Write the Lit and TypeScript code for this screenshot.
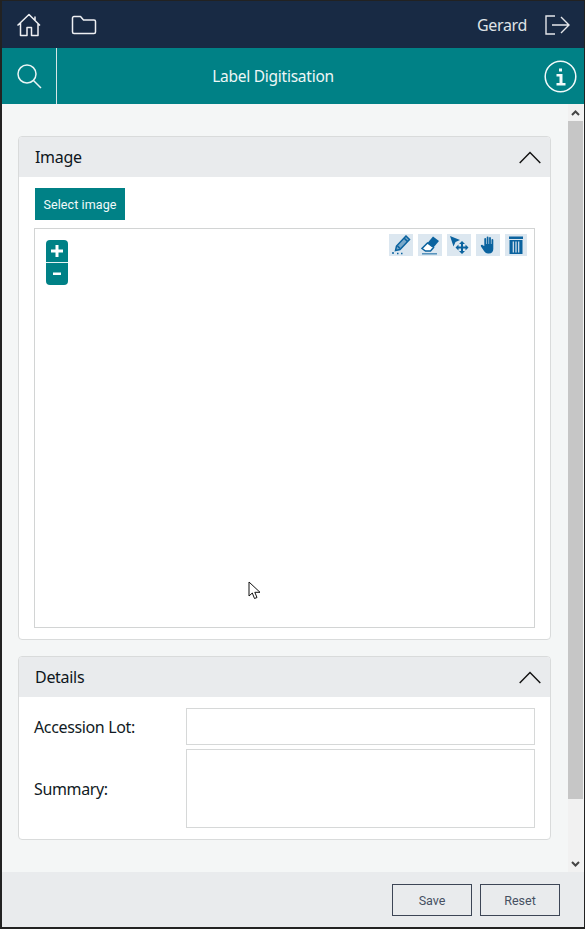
import { LitElement, html, css } from "lit";
import { customElement } from "lit/decorators.js";

@customElement("app-root")
export class AppRoot extends LitElement {
  static styles = css`
    :host { display: block; width: 585px; height: 929px; box-sizing: border-box; background: #222; padding: 1px 1px 2px 2px; font-family: "Noto Sans", sans-serif; overflow: hidden; }
    * { box-sizing: border-box; }
    .frame { height: 100%; display: flex; flex-direction: column; position: relative; }
    .top { height: 47px; flex: none; background: #182a44; display: flex; align-items: center; color: #e4e6ea; padding: 0 14px 0 14px; }
    .top svg { display: block; }
    .folder { margin-left: 29px; }
    .user { margin-left: auto; font-size: 16px; letter-spacing: -0.35px; margin-right: 18px; color: #dfe2e6; }
    .bar { height: 56px; flex: none; background: #008186; display: flex; align-items: center; color: #fff; position: relative; }
    .search { width: 55px; height: 100%; border-right: 1px solid #d6e6e6; display: flex; align-items: center; justify-content: center; flex: none; }
    .title { width: 432px; text-align: center; font-size: 15.5px; letter-spacing: -0.25px; font-weight: 400; color: #eef6f6; }
    .info { margin-left: auto; margin-right: 7px; }
    .mid { flex: 1; min-height: 0; display: flex; background: #f4f6f6; }
    .content { flex: 1; padding: 32px 17px 0 16px; display: flex; flex-direction: column; gap: 16px; }
    .card { background: #fff; border: 1px solid #d9dbdb; border-radius: 4px; overflow: hidden; }
    .head { height: 40px; background: #e9ebed; display: flex; align-items: center; justify-content: space-between; padding: 0 9px 0 16px; font-size: 16px; letter-spacing: -0.3px; color: #0e1620; }
    .img-body { padding: 11px 15px 11px 16px; }
    .select { display: block; width: 90px; height: 32px; border: none; padding: 0; background: #008186; color: #f2fafa; font: 12.5px Roboto, sans-serif; letter-spacing: 0.1px; }
    .canvas { position: relative; margin: 8px 0 0 -1px; width: 501px; height: 400px; border: 1px solid #d2d4d4; background: #fff; }
    .zoom { position: absolute; left: 11px; top: 11px; width: 22px; height: 45px; border-radius: 4px; background: #008186; color: #fff; display: flex; flex-direction: column; overflow: hidden; }
    .zoom span { height: 22px; display: flex; align-items: center; justify-content: center; }
    .zoom i { height: 1px; background: #e5f2f2; }
    .tools { position: absolute; right: 7px; top: 5px; display: flex; gap: 5px; }
    .tool { width: 24px; height: 22px; background: #dce7f0; display: flex; align-items: center; justify-content: center; }
    .tool.narrow { width: 22px; }
    .tool svg { display: block; }
    .cursor { position: absolute; left: 213px; top: 352px; display: block; }
    .det-body { padding: 11px 15px 11px 15px; display: grid; grid-template-columns: 152px 349px; row-gap: 4px; }
    .det-body label { font-size: 16px; letter-spacing: -0.36px; color: #111a24; display: flex; align-items: center; }
    .field { border: 1px solid #d6d8d8; background: #fff; height: 37px; }
    .field.tall { height: 79px; }
    .sb { width: 15px; flex: none; margin-right: 1px; background: #f1f1f1; display: flex; flex-direction: column; }
    .arrow { height: 17px; flex: none; display: flex; align-items: center; justify-content: center; }
    .thumb { height: 678px; background: #c6c6c6; flex: none; }
    .sb .end { margin-top: auto; }
    .foot { height: 55px; flex: none; background: #e9ebed; display: flex; justify-content: flex-end; gap: 8px; padding: 12px 24px 0 0; align-items: flex-start; }
    .foot button { width: 80px; height: 32px; background: transparent; border: 1px solid #3d4656; color: #465062; font: 12.5px Roboto, sans-serif; padding: 0; }
  `;

  render() {
    return html`<div class="frame">
      <div class="top">
        <svg width="26" height="24" viewBox="0 0 26 24" fill="none" stroke="#eef0f3" stroke-width="1.5" stroke-linejoin="round"><path d="M1.5 12.5 13 1.5l11 11M4.500 10v12.500h6.500v-8h4.500v8H22V10M19 7V3.500"/></svg>
        <svg class="folder" width="26" height="20" viewBox="0 0 26 20" fill="none" stroke="#eef0f3" stroke-width="1.5" stroke-linejoin="round"><path d="M1.500 3a1.500 1.500 0 0 1 1.500-1.500h6.500l3 3.500H23a1.500 1.500 0 0 1 1.500 1.500V17a1.500 1.500 0 0 1-1.500 1.500H3A1.500 1.500 0 0 1 1.500 17z"/></svg>
        <span class="user">Gerard</span>
        <svg width="25" height="20" viewBox="0 0 25 20" fill="none" stroke="#e4e6ea" stroke-width="1.4"><path d="M10 1H1v18h9M7 10h17M16 2l8 8-8 8"/></svg>
      </div>
      <div class="bar">
        <div class="search"><svg width="26" height="26" viewBox="0 0 26 26" fill="none" stroke="#eaf5f5" stroke-width="1.500"><circle cx="11" cy="11" r="9"/><path d="M17.500 17.500 25 25"/></svg></div>
        <div class="title">Label Digitisation</div>
        <svg class="info" width="33" height="33" viewBox="0 0 33 33" fill="none"><circle cx="16.500" cy="16.500" r="15.300" stroke="#f2fafa" stroke-width="1.500"/><path d="M15 8.500h3v3h-3zM12.500 14h6v9h3v2.500h-9V23h3v-6.500h-3z" fill="#f2fafa"/></svg>
      </div>
      <div class="mid">
        <div class="content">
          <section class="card">
            <div class="head">Image
              <svg width="22" height="14" viewBox="0 0 22 14" fill="none" stroke="#111" stroke-width="1.400"><path d="M.7 13 11 2.500 21.300 13"/></svg>
            </div>
            <div class="img-body">
              <button class="select">Select image</button>
              <div class="canvas">
                <div class="zoom">
                  <span><svg width="14" height="14" viewBox="0 0 14 14" fill="#fff"><path d="M5.500 1h3v4.500H13v3H8.500V13h-3V8.500H1v-3h4.500z"/></svg></span>
                  <i></i>
                  <span><svg width="10" height="4" viewBox="0 0 10 4" fill="#fff"><path d="M1 .5h8v2.500H1z"/></svg></span>
                </div>
                <div class="tools">
                  <div class="tool"><svg width="20" height="20" viewBox="0 0 20 20"><path d="M15 1l3.500 3.500-9.500 10-4.500 1 1-4.500z" fill="#7aa8c9" stroke="#0b639f" stroke-width="1.500"/><path d="M13 3l3.500 3.500M6.500 11l2.500 2.500" stroke="#0b639f" stroke-width="1.500"/><path d="M1 18h2M6 18.500h1.500M10 18.500h1.500" stroke="#0b639f" stroke-width="1.400"/></svg></div>
                  <div class="tool"><svg width="22" height="20" viewBox="0 0 22 20"><path d="M8.500 8l5.500-6.500 6 4.500-5.500 6.500z" fill="#0b639f"/><path d="M8.500 8l6 4.500-3 3.500H6.500L3 13.500z" fill="#fff" stroke="#0b639f" stroke-width="1.500"/><path d="M3 18.800h15" stroke="#0b639f" stroke-width="1.400" opacity=".7"/></svg></div>
                  <div class="tool"><svg width="22" height="20" viewBox="0 0 22 20" fill="#0b639f"><path d="M2 1l10 4-4.500 2-2 4.500z"/><path d="M14 6l3 3h-2v2.500h2.500v-2l3 3-3 3v-2H15V16h2l-3 3-3-3h2v-2.500h-2.500v2l-3-3 3-3v2H13V9h-2z"/></svg></div>
                  <div class="tool"><svg width="20" height="20" viewBox="0 0 20 20" fill="#0b639f"><path d="M6.300 11V4a.9.9 0 0 1 1.800 0v5h.6V2.500a.9.9 0 0 1 1.800 0V9h.6V3a.9.9 0 0 1 1.800 0v6h.6V5a.9.9 0 0 1 1.800 0v9c0 2.500-1.500 4.500-4.500 4.500H10c-2 0-3-1-4-2.500l-3-4.500c-.7-1.100.8-2.300 1.700-1.300z"/></svg></div>
                  <div class="tool narrow"><svg width="16" height="20" viewBox="0 0 16 20" fill="#0b639f"><path d="M1 1.500h14v2.500H1zM1.500 5h13v14h-13z"/><path d="M5.300 6.500v11M8 6.500v11M10.700 6.500v11" stroke="#dce7f0" stroke-width="1.200"/></svg></div>
                </div>
                <svg class="cursor" width="14" height="20" viewBox="0 0 14 20"><path d="M1 1v14l3.300-3 2.200 5.500 2.500-1-2.200-5.200H12z" fill="#fff" stroke="#111" stroke-width="1"/></svg>
              </div>
            </div>
          </section>
          <section class="card">
            <div class="head">Details
              <svg width="22" height="14" viewBox="0 0 22 14" fill="none" stroke="#111" stroke-width="1.400"><path d="M.7 13 11 2.500 21.300 13"/></svg>
            </div>
            <div class="det-body">
              <label>Accession Lot:</label><div class="field"></div>
              <label>Summary:</label><div class="field tall"></div>
            </div>
          </section>
        </div>
        <div class="sb">
          <div class="arrow"><svg width="9" height="6" viewBox="0 0 9 6" fill="none" stroke="#444" stroke-width="2"><path d="M1 5l3.500-3.500L8 5"/></svg></div>
          <div class="thumb"></div>
          <div class="arrow end"><svg width="9" height="6" viewBox="0 0 9 6" fill="none" stroke="#444" stroke-width="2"><path d="M1 1l3.500 3.500L8 1"/></svg></div>
        </div>
      </div>
      <div class="foot"><button>Save</button><button>Reset</button></div>
    </div>`;
  }
}
